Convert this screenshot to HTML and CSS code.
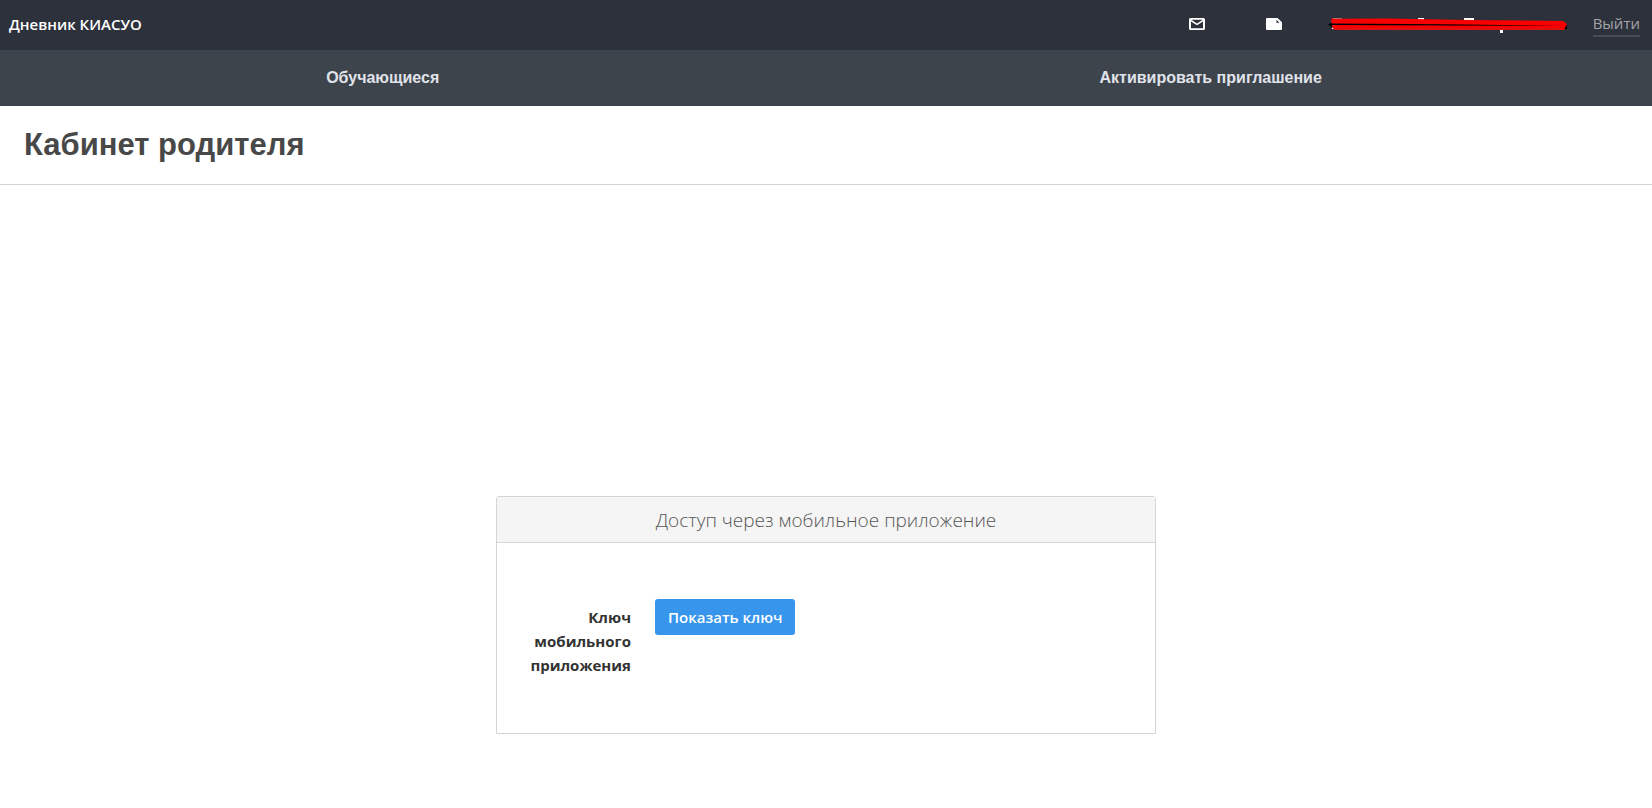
FILE: index.html
```
<!DOCTYPE html>
<html lang="ru">
<head>
<meta charset="utf-8">
<meta name="viewport" content="width=device-width, initial-scale=1">
<title>Кабинет родителя</title>
<link rel="stylesheet" href="styles.css">
</head>
<body>
<header class="topbar">
  <a class="brand" href="#">Дневник КИАСУО</a>
  <div class="tools">
    <a class="tool" href="#" aria-label="Сообщения">
      <svg class="icon" viewBox="0 0 16 12" aria-hidden="true"><path fill-rule="evenodd" d="M1.500 0h13A1.500 1.500 0 0 1 16 1.500v9A1.500 1.500 0 0 1 14.500 12h-13A1.500 1.500 0 0 1 0 10.500v-9A1.500 1.500 0 0 1 1.500 0zM2 3.400V10.300h12V3.400L8 7.200zM2.200 1.700L8 5.400l5.800-3.700z"/></svg>
    </a>
    <a class="tool" href="#" aria-label="Заметки">
      <svg class="icon" viewBox="0 0 16 12" aria-hidden="true"><path fill-rule="evenodd" d="M1 0h10.500L16 4.200V11a1 1 0 0 1-1 1H1a1 1 0 0 1-1-1V1a1 1 0 0 1 1-1zM10.500 1.800V4.800H13.500z"/></svg>
    </a>
    <svg class="scribble" viewBox="0 0 240 20" aria-hidden="true">
      <path class="mark" d="M5 4.500h9v2H5zM90 4h6v3h-6zM136 4h10v3h-10zM4 12h4v3H4zM172 15h3v4h-3z"/>
      <path class="ink" d="M0 10.500l4-2 4 1v4H4zM234 11h5v4h-5z"/>
      <path class="red" d="M3 4.700L60 4.500l80 1.500 95 1 4 3-3 6H6L4 12z"/>
      <path class="ink" d="M3 9.500l110 .8 120 1.500-120-.4L3 11z"/>
      <path class="shade" d="M6 14h226v2H6z"/>
    </svg>
    <a class="logout" href="#">Выйти</a>
  </div>
</header>
<nav class="nav">
  <a href="#">Обучающиеся</a>
  <a href="#">Активировать приглашение</a>
</nav>
<div class="heading"><h1>Кабинет родителя</h1></div>
<main class="content">
  <section class="card">
    <h2>Доступ через мобильное приложение</h2>
    <div class="row">
      <label for="show-key">Ключ мобильного приложения</label>
      <button id="show-key" type="button">Показать ключ</button>
    </div>
  </section>
</main>
</body>
</html>
```
FILE: styles.css
```
* { box-sizing: border-box; }
body {
  margin: 0;
  background: #fff;
  color: #333;
  font: 15px/24px "Open Sans", "Noto Sans", sans-serif;
}
a { color: inherit; text-decoration: none; }
.topbar {
  display: flex;
  align-items: center;
  justify-content: space-between;
  min-height: 50px;
  padding: 0 12px 2px 9px;
  background: #2d313c;
}
.brand { color: #fff; font-weight: 600; }
.tools { display: flex; align-items: center; }
.tool { display: flex; margin-right: 61px; }
.tool + .tool { margin-right: 46px; }
.icon { width: 16px; height: 12px; fill: #fff; }
.scribble { width: 240px; height: 20px; margin-right: 25px; }
.mark { fill: #fff; }
.ink { fill: #000; }
.red { fill: #f80000; }
.shade { fill: #df1010; }
.logout {
  color: #a2a4aa;
  border-bottom: 2px solid #464b55;
}
.nav {
  display: flex;
  align-items: center;
  justify-content: space-around;
  gap: 8px;
  padding-right: 4px;
  min-height: 56px;
  background: #3d444c;
  color: #e0e3ea;
  font: bold 16px/24px "Liberation Sans", Arial, sans-serif;
}
.heading {
  padding: 20px 24px;
  border-bottom: 1px solid #d4d4d5;
}
h1 {
  margin: 0;
  color: #484848;
  font: bold 31px/38px "Liberation Sans", Arial, sans-serif;
}
.content { padding: 311px 16px 74px; }
.card {
  max-width: 660px;
  margin: 0 auto;
  border: 1px solid #d4d4d5;
  border-radius: 3px 3px 0 0;
}
h2 {
  margin: 0;
  padding: 9px 16px 7px;
  background: #f5f5f5;
  border-bottom: 1px solid #d4d4d5;
  color: #555;
  font-size: 19px;
  font-weight: 300;
  line-height: 29px;
  text-align: center;
}
.row {
  display: flex;
  align-items: flex-start;
  gap: 24px;
  padding: 56px 24px;
}
label {
  width: 110px;
  padding-top: 6px;
  font-weight: 700;
  text-align: right;
}
button {
  padding: 6px 13px;
  border: 0;
  border-radius: 3px;
  background: #3895ec;
  color: #fff;
  font: inherit;
  font-weight: 600;
}
```
